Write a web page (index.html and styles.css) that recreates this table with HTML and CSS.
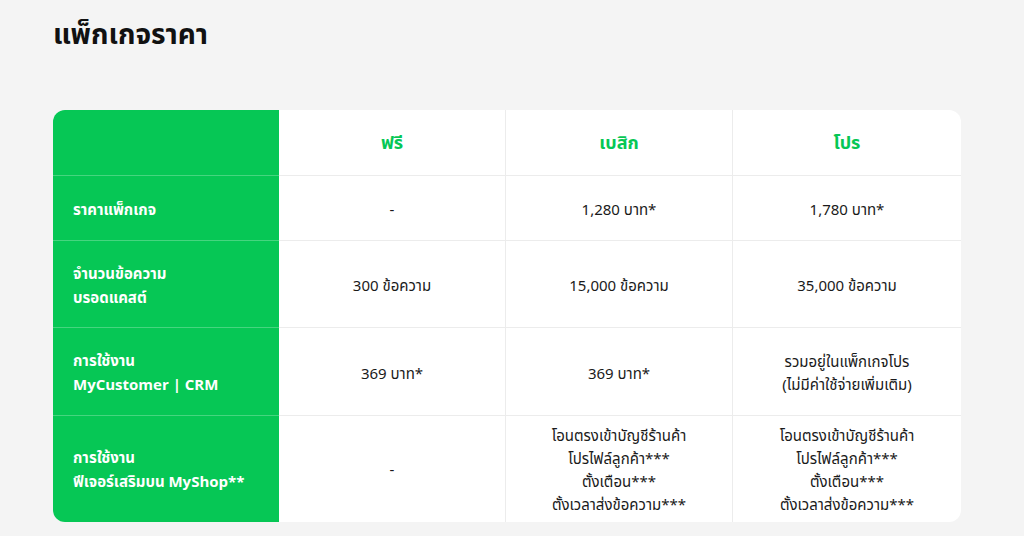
FILE: index.html
```html
<!DOCTYPE html>
<html lang="th">
<head>
<meta charset="utf-8">
<title>แพ็กเกจราคา</title>
<link rel="stylesheet" href="styles.css">
</head>
<body>
<main class="page">
  <h1 class="title">แพ็กเกจราคา</h1>
  <div class="table">
    <div class="cell label head"></div>
    <div class="cell plan head">ฟรี</div>
    <div class="cell plan head">เบสิก</div>
    <div class="cell plan head last">โปร</div>

    <div class="cell label">ราคาแพ็กเกจ</div>
    <div class="cell">-</div>
    <div class="cell">1,280 บาท*</div>
    <div class="cell last">1,780 บาท*</div>

    <div class="cell label">จำนวนข้อความ<br>บรอดแคสต์</div>
    <div class="cell">300 ข้อความ</div>
    <div class="cell">15,000 ข้อความ</div>
    <div class="cell last">35,000 ข้อความ</div>

    <div class="cell label">การใช้งาน<br>MyCustomer | CRM</div>
    <div class="cell">369 บาท*</div>
    <div class="cell">369 บาท*</div>
    <div class="cell last">รวมอยู่ในแพ็กเกจโปร<br>(ไม่มีค่าใช้จ่ายเพิ่มเติม)</div>

    <div class="cell label bottom">การใช้งาน<br>ฟีเจอร์เสริมบน MyShop**</div>
    <div class="cell bottom">-</div>
    <div class="cell bottom">โอนตรงเข้าบัญชีร้านค้า<br>โปรไฟล์ลูกค้า***<br>ตั้งเตือน***<br>ตั้งเวลาส่งข้อความ***</div>
    <div class="cell bottom last">โอนตรงเข้าบัญชีร้านค้า<br>โปรไฟล์ลูกค้า***<br>ตั้งเตือน***<br>ตั้งเวลาส่งข้อความ***</div>
  </div>
</main>
</body>
</html>
```
FILE: styles.css
```css
html, body {
  margin: 0;
  padding: 0;
  background: #f4f4f4;
}
body {
  font-family: "Noto Sans Thai", "Noto Sans", "DejaVu Sans", sans-serif;
  color: #111;
}
.page {
  padding: 18px 63px 0 53px;
}
.title {
  margin: 0;
  font-size: 28px;
  font-weight: 700;
  line-height: 36px;
  color: #111;
}
.table {
  margin-top: 56px;
  display: grid;
  grid-template-columns: 226px 227px 227px 228px;
  grid-template-rows: 66px 65px 87px 88px 106px;
  background: #fff;
  border-radius: 12px;
  overflow: hidden;
}
.cell {
  display: flex;
  align-items: center;
  justify-content: center;
  text-align: center;
  padding-top: 5px;
  font-size: 15px;
  line-height: 23px;
  color: #1a1a1a;
  border-bottom: 1px solid #ececec;
  border-right: 1px solid #ececec;
}
.cell.head { padding-top: 2px; }
.cell.bottom { padding-top: 3px; border-bottom: none; }
.cell.last { border-right: none; }
.label {
  background: #06c755;
  color: #fff;
  font-weight: 700;
  font-size: 15px;
  line-height: 24px;
  justify-content: flex-start;
  text-align: left;
  padding-left: 20px;
  border-right: none;
  border-bottom: 1px solid #45d57f;
}
.label.bottom { border-bottom: none; }
.plan {
  color: #06c755;
  font-weight: 700;
  font-size: 18px;
}
```
